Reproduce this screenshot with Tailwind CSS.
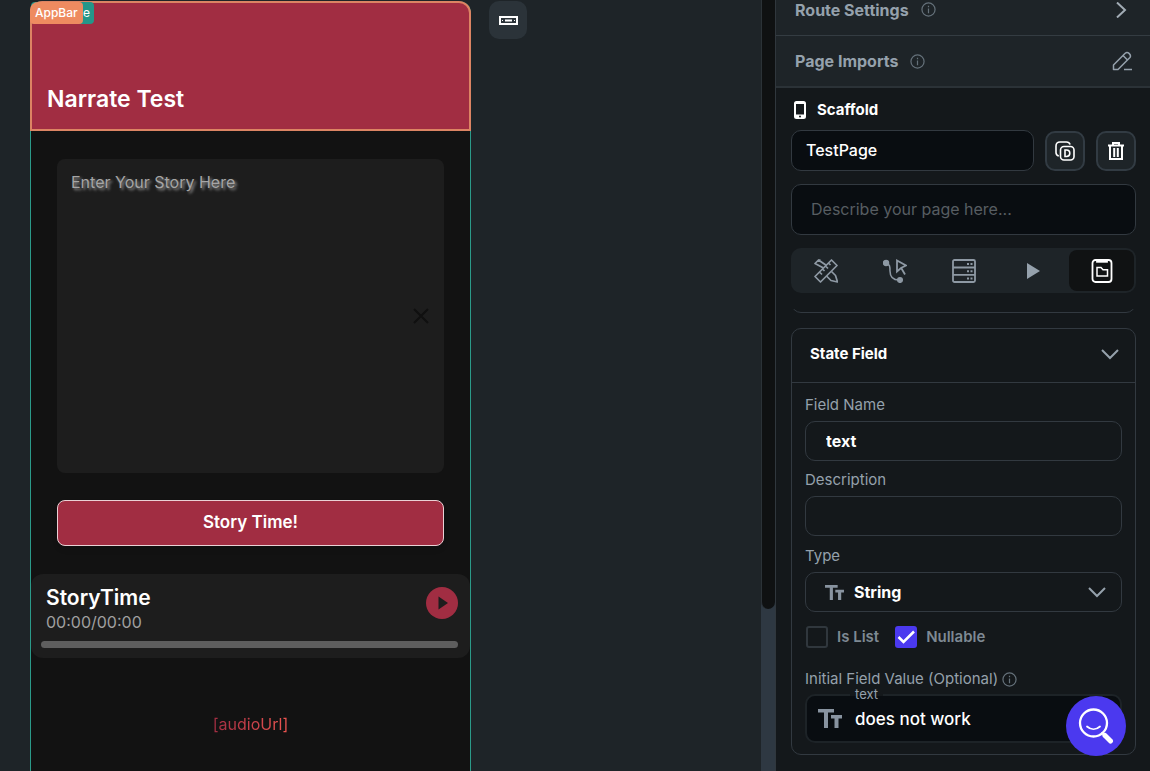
<!DOCTYPE html>
<html lang="en">
<head>
    <meta charset="UTF-8">
    <meta name="viewport" content="width=device-width, initial-scale=1.0">
    <title>Page Builder</title>
    <script src="https://cdn.jsdelivr.net/npm/@tailwindcss/browser@4"></script>
</head>

<body class="bg-[#14181b] font-[Inter,sans-serif] text-white">

    <div class="flex h-screen overflow-hidden">

        <!-- Canvas -->
        <main class="flex flex-1 items-start bg-[#1e2428] pl-[30px] pt-px">

            <div class="relative flex min-h-screen w-[441px] flex-col rounded-t-xl border-x border-[#2b9a89] bg-[#121212]">

                <header class="-mx-px flex h-[130px] items-end rounded-t-xl border-2 border-[#dc8463] bg-[#a12d42] px-[15px] pb-3">
                    <h1 class="text-[23px] leading-9 font-semibold">Narrate Test</h1>
                </header>
                <span class="absolute top-px left-0 flex h-[22px] w-[63px] items-center justify-end rounded-sm bg-[#249689] pr-1 text-xs">e</span>
                <span class="absolute top-px -left-px flex h-[22px] items-center rounded-sm rounded-tl-lg bg-[#ee8b60] px-[5px] text-xs font-medium">AppBar</span>

                <div class="relative px-[26px] pt-7">
                    <textarea aria-label="Story" placeholder="Enter Your Story Here" class="block h-[314px] w-full resize-none rounded-lg bg-[#1d1d1d] px-[14px] py-[11px] text-base placeholder:text-[#a5a5a5] [text-shadow:2px_2px_3px_#999]"></textarea>
                    <button aria-label="Clear" class="absolute top-[177px] right-[41px]">
                        <svg class="size-4" viewBox="0 0 16 16" fill="none" stroke="#101010" stroke-width="2"><path d="M1 1l14 14M15 1L1 15"/></svg>
                    </button>
                </div>

                <div class="px-[26px] pt-[27px]">
                    <button class="h-[46px] w-full rounded-lg border border-[#ead0d5] bg-[#a12d42] text-[17px] font-semibold shadow-md">Story Time!</button>
                </div>

                <!-- Audio player -->
                <section class="mt-7 flex flex-col rounded-xl bg-[#1d1d1d] pt-[10px] pr-3 pb-[10px] pl-[10px]">
                    <div class="flex items-start justify-between pl-[5px]">
                        <div>
                            <h2 class="text-[21px] leading-7 font-semibold">StoryTime</h2>
                            <p class="text-base leading-5 text-[#a0a0a0]">00:00/00:00</p>
                        </div>
                        <button aria-label="Play" class="pt-[3px]">
                            <svg class="size-8" viewBox="0 0 32 32"><circle cx="16" cy="16" r="16" fill="#a12d42"/><path d="M12.500 9.500v13l9.500-6.500z" fill="#1d1d1d"/></svg>
                        </button>
                    </div>
                    <div class="mt-[9px] h-[7px] rounded-sm bg-[#5e5e5e]"></div>
                </section>

                <p class="mt-[54px] text-center text-base"><span class="bg-linear-to-r from-[#a12d42] to-[#ee5550] bg-clip-text text-transparent">[audioUrl]</span></p>
            </div>

            <button aria-label="App bar" class="ml-[18px] flex size-[38px] items-center justify-center rounded-[10px] bg-[#2b3339]">
                <svg class="h-[9px] w-[19px]" viewBox="0 0 19 9" fill="none" stroke="#fff"><path stroke-width="2" d="M1 1h17v7H1z"/><path stroke-width="2" d="M6 4.500h7"/><path stroke-width="1" d="M3 4.500h1M15 4.500h1"/></svg>
            </button>
        </main>

        <!-- Scrollbar -->
        <div class="w-[14px] bg-[#2e3842]">
            <div class="h-[79%] rounded-b-lg border-l border-[#2b3237] bg-[#0f1112]"></div>
        </div>

        <!-- Properties -->
        <aside class="flex w-[375px] flex-col border-l border-[#30373d] bg-[#14181b]">

            <div class="flex h-9 items-center border-b border-[#343c42] bg-[#1e2428] pr-[22px] pb-4 pl-[19px]">
                <h3 class="text-base font-bold text-[#95a1ac]">Route Settings</h3>
                <svg class="ml-3 size-[15px]" viewBox="0 0 16 16" fill="none" stroke="#65717a" stroke-width="1.300"><circle cx="8" cy="8" r="7"/><path d="M8 7v5M8 4v1.500"/></svg>
                <button aria-label="Open route settings" class="ml-auto">
                    <svg class="h-4 w-4" viewBox="0 0 16 16" fill="none" stroke="#a2acb5" stroke-width="2"><path d="M5 .5L13 8l-8 7.500"/></svg>
                </button>
            </div>

            <div class="flex h-[52px] items-center border-b-2 border-[#2b3237] bg-[#1e2428] pr-[18px] pl-[19px]">
                <h3 class="text-base font-bold text-[#95a1ac]">Page Imports</h3>
                <svg class="ml-3 size-[15px]" viewBox="0 0 16 16" fill="none" stroke="#65717a" stroke-width="1.300"><circle cx="8" cy="8" r="7"/><path d="M8 7v5M8 4v1.500"/></svg>
                <button aria-label="Edit imports" class="ml-auto">
                    <svg class="size-5" viewBox="0 0 20 20" fill="none" stroke="#95a1ac" stroke-width="1.500" stroke-linejoin="round"><path d="M1.500 18.500V14L13.200 2.200c2.600-2.300 6.800 1.900 4.500 4.500L6 18.500zM11 4.500L15.500 9M12 18.500h8"/></svg>
                </button>
            </div>

            <div class="pr-[14px] pl-[15px]">

                <div class="flex h-[42px] items-center pt-[2px] pl-[3px]">
                    <svg class="h-[18px] w-3" viewBox="0 0 12 18"><rect x="1" y="1" width="10" height="16" rx="1.500" fill="none" stroke="#fff" stroke-width="2"/><path d="M1 1h10v2H1zM1 13.500h10V17H1z" fill="#fff"/><circle cx="6" cy="15.500" r="1" fill="#14181b"/></svg>
                    <h2 class="ml-[11px] text-[15px] font-bold">Scaffold</h2>
                </div>

                <div class="flex items-center gap-[11px]">
                    <input type="text" aria-label="Page name" value="TestPage" class="h-[41px] min-w-0 flex-1 rounded-[10px] border border-[#323940] bg-[#090d11] px-[14px] pb-[2px] text-base font-medium">
                    <button aria-label="Duplicate" class="flex size-10 items-center justify-center rounded-[10px] border-2 border-[#323b43] bg-[#1e2428]">
                        <svg class="size-5" viewBox="0 0 20 20" fill="none" stroke="#fff" stroke-width="1.600"><rect x="5.500" y="5.500" width="13.500" height="13.500" rx="3.500"/><path d="M3.800 15C2 14.500 1 13.200 1 11.500V5c0-2.500 1.500-4 4-4h6.500c1.700 0 3 .8 3.600 2.500M10 9v6.500h1.500c2 0 3.300-1 3.300-3.200S13.500 9 11.500 9z"/></svg>
                    </button>
                    <button aria-label="Delete" class="flex size-10 items-center justify-center rounded-[10px] border-2 border-[#323b43] bg-[#1e2428]">
                        <svg class="h-5 w-4" viewBox="0 0 16 20" fill="none" stroke="#fff" stroke-width="2"><path d="M0 4.500h16M5 4V2h6v2M2 4.500V18h12V4.500M6.200 7v9M9.800 7v9"/></svg>
                    </button>
                </div>

                <input type="text" aria-label="Page description" placeholder="Describe your page here..." class="mt-[13px] h-[51px] w-full rounded-[10px] border border-[#323940] bg-[#090d11] px-[19px] pb-[2px] text-base placeholder:text-[#575d62]">

                <nav class="mt-[13px] grid h-[45px] grid-cols-5 rounded-[10px] bg-[#1e2428]">
                    <button aria-label="Design" class="flex items-center justify-center">
                        <svg class="size-6" viewBox="0 0 24 24" fill="none" stroke="#8e99a4" stroke-width="1.700" stroke-linejoin="round"><path d="M17.500 1L23 6.500 6.500 23 1 17.500zM14.500 4l2 2M11.500 7l2.500 2.500M8.500 10l2 2M5.500 13l2.500 2.500"/><path d="M9.500 9L1 4.500 4.500 1 12.500 6.500M4.500 1L6.500 1M17.500 12.500l4 4L23.500 23 17 21.500l-4.500-4.500"/></svg>
                    </button>
                    <button aria-label="Actions" class="flex items-center justify-center">
                        <svg class="size-6" viewBox="0 0 24 24" fill="none" stroke="#8e99a4" stroke-width="1.500"><circle cx="3" cy="4" r="2.500" fill="#8e99a4"/><circle cx="17" cy="21" r="2.300" fill="#8e99a4"/><path d="M3 4c4 1 4 4 4 8 0 6 3 9 9 9"/><path stroke-width="1.800" d="M14 1.500v11l4-3.500 5-2.500zM18.500 9.500l3.500 6"/></svg>
                    </button>
                    <button aria-label="Backend" class="flex items-center justify-center">
                        <svg class="size-6" viewBox="0 0 24 24" fill="none" stroke="#8e99a4" stroke-width="1.800"><rect x="1" y="1" width="22" height="22" rx="1.500"/><path d="M1 8.500h22M1 15.800h22"/><path stroke-width="2" stroke-dasharray="2 1.500" d="M15 5h5.500M15 12.200h5.500M15 19.500h5.500"/></svg>
                    </button>
                    <button aria-label="Run" class="flex items-center justify-center">
                        <svg class="h-4 w-[14px]" viewBox="0 0 14 16" fill="#95a1ac"><path d="M1 0l13 8-13 8z"/></svg>
                    </button>
                    <button aria-label="State" class="m-[2px] flex items-center justify-center rounded-lg bg-[#101213]">
                        <svg class="size-6" viewBox="0 0 24 24" fill="none" stroke="#fff" stroke-width="1.800"><rect x="2.500" y="1" width="19" height="22" rx="3"/><path d="M7 1h10v1.800H7z" fill="#fff"/><path stroke-width="1.500" d="M7 8.500h4l2 2.200h4.500V17H7z"/></svg>
                    </button>
                </nav>

                <!-- Tail of the field scrolled out above -->
                <div class="mt-4 flex h-1 items-end overflow-hidden">
                    <div class="h-6 w-full rounded-[10px] border border-[#323940]"></div>
                </div>

                <section class="mt-[15px] rounded-[10px] border border-[#323940]">
                    <div class="flex h-[54px] items-center justify-between border-b border-[#323940] pr-4 pb-[2px] pl-[18px]">
                        <h2 class="text-[15px] font-bold">State Field</h2>
                        <button aria-label="Collapse">
                            <svg class="h-[11px] w-[18px]" viewBox="0 0 18 11" fill="none" stroke="#95a1ac" stroke-width="2"><path d="M1 1l8 8 8-8"/></svg>
                        </button>
                    </div>

                    <div class="flex flex-col px-[13px] pt-3 pb-[11px] text-[#95a1ac]">
                        <label for="name" class="h-5 text-[15px] leading-5">Field Name</label>
                        <input id="name" type="text" value="text" class="mt-[6px] h-10 rounded-[10px] border border-[#323940] px-5 text-base font-bold text-white">

                        <label for="description" class="mt-[9px] h-5 text-[15px] leading-5">Description</label>
                        <input id="description" type="text" class="mt-[6px] h-10 rounded-[10px] border border-[#323940] px-5 text-base font-bold text-white">

                        <label for="type" class="mt-[10px] h-5 text-[15px] leading-5">Type</label>
                        <div class="relative mt-[6px]">
                            <select id="type" class="h-10 w-full appearance-none rounded-[10px] border border-[#323940] bg-[#14181b] pl-12 text-base font-bold text-white">
                                <option>String</option>
                            </select>
                            <svg class="pointer-events-none absolute top-[13px] left-5 h-[15px] w-[19px]" viewBox="0 0 24 19" fill="#8893a0"><path d="M0 0h16v3.500h-6V19H6V3.500H0zM13 6h11v3.500h-3.500V19h-4V9.500H13z"/></svg>
                            <svg class="pointer-events-none absolute top-[15px] right-4 h-[11px] w-[18px]" viewBox="0 0 18 11" fill="none" stroke="#95a1ac" stroke-width="2"><path d="M1 1l8 8 8-8"/></svg>
                        </div>

                        <div class="mt-[14px] flex h-[22px] items-center text-[15px] font-semibold text-[#7e8993]">
                            <input id="list" type="checkbox" class="ml-px size-[22px] appearance-none rounded-[3px] border-2 border-[#30373d]">
                            <label for="list" class="ml-[9px]">Is List</label>
                            <div class="relative ml-4 size-[22px]">
                                <input id="nullable" type="checkbox" checked class="block size-[22px] appearance-none rounded-[3px] bg-[#4b39ef]">
                                <svg class="pointer-events-none absolute inset-0" viewBox="0 0 22 22" fill="none" stroke="#fff" stroke-width="2.500"><path d="M3.500 11l5 5L19 5.500"/></svg>
                            </div>
                            <label for="nullable" class="ml-[9px]">Nullable</label>
                        </div>

                        <div class="mt-[21px] flex h-5 items-center">
                            <label for="initial" class="text-[15px]">Initial Field Value (Optional)</label>
                            <svg class="ml-1 size-[15px]" viewBox="0 0 16 16" fill="none" stroke="#65717a" stroke-width="1.300"><circle cx="8" cy="8" r="7"/><path d="M8 7v5M8 4v1.500"/></svg>
                        </div>
                        <div class="relative mt-[5px]">
                            <input id="initial" type="text" value="does not work" class="block h-[49px] w-full rounded-[10px] border-2 border-[#1d2327] bg-[#090d11] pl-12 text-[17px] font-medium text-white">
                            <span class="absolute -top-2 left-[45px] bg-linear-to-b from-[#14181b] from-60% to-[#090d11] to-60% px-[5px] text-[13px] leading-4">text</span>
                            <svg class="pointer-events-none absolute top-[15px] left-[13px] h-[19px] w-6" viewBox="0 0 24 19" fill="#8893a0"><path d="M0 0h16v3.500h-6V19H6V3.500H0zM13 6h11v3.500h-3.500V19h-4V9.500H13z"/></svg>
                        </div>
                    </div>
                </section>
            </div>
        </aside>
    </div>

    <!-- Help bubble -->
    <button aria-label="Help" class="fixed right-6 bottom-[15px] flex size-[60px] items-center justify-center rounded-full bg-[#4b39ef]">
        <svg class="size-9" viewBox="0 0 36 36" fill="none" stroke="#fff" stroke-linecap="round"><circle cx="15.500" cy="15" r="13.500" stroke-width="2.300"/><path stroke-width="1.800" d="M9 18.500c4 3.500 9 3.500 13 0"/><path stroke-width="2.500" d="M24.500 25l3 3"/><path stroke-width="5" d="M27 27.500l5.500 5.500"/></svg>
    </button>

</body>
</html>
